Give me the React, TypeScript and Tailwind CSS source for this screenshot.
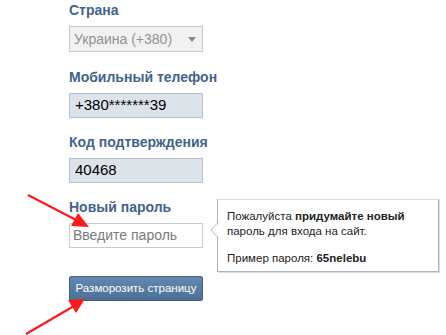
import React from "react";

const font = "font-['Liberation_Sans',Arial,sans-serif]";

function Label({ children }: { children: React.ReactNode }) {
  return (
    <div className="h-[16px] text-[14px] leading-[16px] font-bold text-[#41648c] whitespace-nowrap">
      {children}
    </div>
  );
}

export default function App() {
  return (
    <div className={`relative w-[446px] h-[335px] overflow-hidden bg-white ${font}`}>
      <div className="flex flex-col pl-[69px] pt-[2px] w-[134px] box-content">
        <Label>Страна</Label>
        <div className="mt-[8px] h-[26px] flex items-center justify-between border border-[#c9c9c9] bg-[#f1f1f1] pl-[4px] pr-[6px] text-[14px] text-[#929292] whitespace-nowrap">
          <span>Украина (+380)</span>
          <svg width="8" height="5" viewBox="0 0 8 5">
            <path d="M0 0 L8 0 L4 5 Z" fill="#8a8a8a" />
          </svg>
        </div>

        <div className="mt-[17px]">
          <Label>Мобильный телефон</Label>
        </div>
        <div className="mt-[8px] h-[25px] flex items-center border border-[#b3bfcb] bg-[#dce3eb] pl-[5px] text-[15px] text-black">
          +380*******39
        </div>

        <div className="mt-[16px]">
          <Label>Код подтверждения</Label>
        </div>
        <div className="mt-[8px] h-[25px] flex items-center border border-[#b3bfcb] bg-[#dce3eb] pl-[5px] text-[15px] text-black">
          40468
        </div>

        <div className="mt-[16px]">
          <Label>Новый пароль</Label>
        </div>
        <div className="mt-[8px] h-[25px] flex items-center border border-[#c8cdd3] bg-white pl-[3px] text-[14px] text-[#7a7a7a] whitespace-nowrap">
          Введите пароль
        </div>

        <button className="mt-[28px] h-[25px] flex items-center justify-center rounded-[2px] border border-[#3f6289] bg-gradient-to-b from-[#6489b0] to-[#4b6f96] text-[11.5px] text-white whitespace-nowrap">
          Разморозить страницу
        </button>
      </div>

      {/* tooltip */}
      <div className="absolute left-[217px] top-[199px] w-[222px] h-[73px] bg-white border border-[#a7b5c4] border-t-[#d4dbe2] shadow-[1px_1px_0_#d6dde5] pl-[9px] pt-[9px] text-[11.5px] leading-[15px] text-[#222]">
        <div>
          Пожалуйста <b>придумайте новый</b>
        </div>
        <div>пароль для входа на сайт.</div>
        <div className="mt-[12px]">
          Пример пароля: <b>65nelebu</b>
        </div>
        <svg className="absolute left-[-8px] top-[22px]" width="9" height="16" viewBox="0 0 9 16">
          <path d="M8.5 0 L0.8 8 L8.5 16" fill="white" stroke="#a7b5c4" strokeWidth="1" />
        </svg>
      </div>

      {/* red arrows */}
      <svg className="absolute left-0 top-0 pointer-events-none" width="446" height="335" viewBox="0 0 446 335">
        <line x1="28" y1="195" x2="78" y2="221" stroke="#ff1a1a" strokeWidth="2.2" />
        <path d="M89 227 L71 226 L78 213 Z" fill="#ff1a1a" />
        <line x1="26" y1="334" x2="74" y2="306" stroke="#ff1a1a" strokeWidth="2.2" />
        <path d="M85 299 L76 313 L68 300 Z" fill="#ff1a1a" />
      </svg>
    </div>
  );
}
